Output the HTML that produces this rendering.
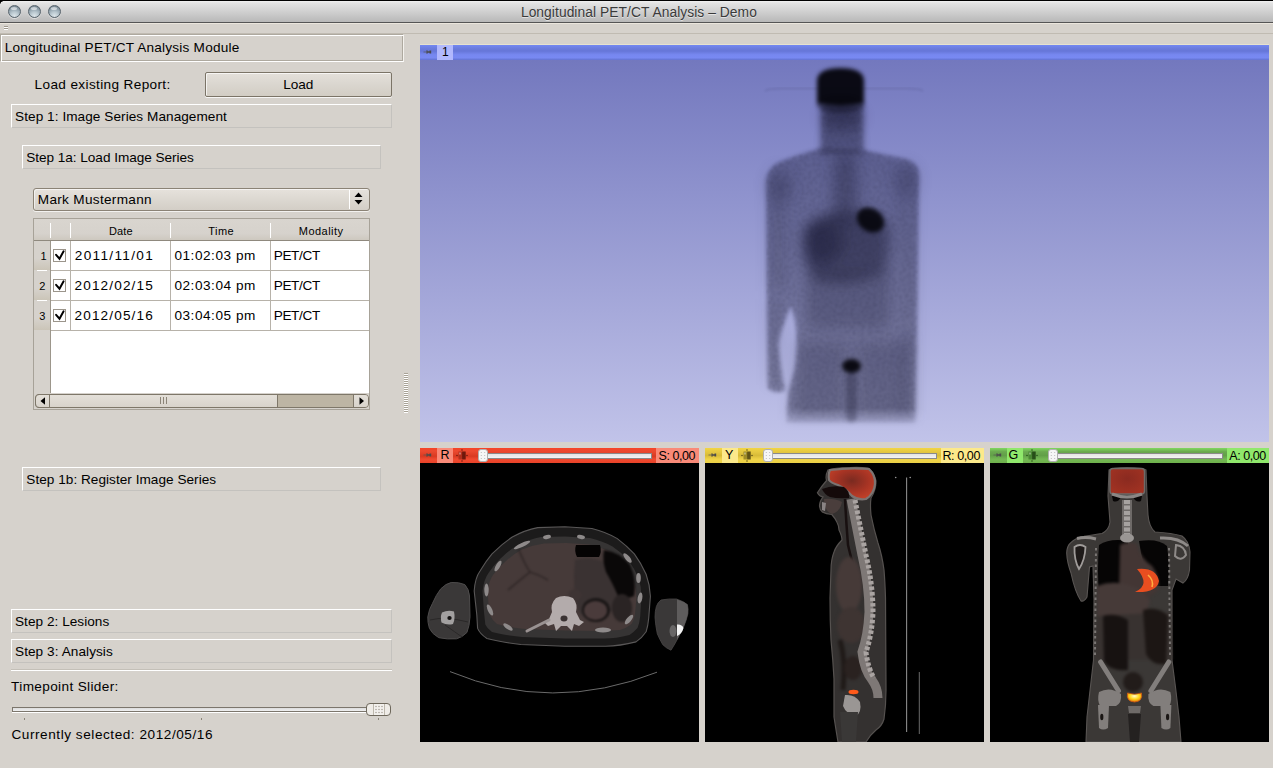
<!DOCTYPE html>
<html><head><meta charset="utf-8">
<style>
*{margin:0;padding:0;box-sizing:border-box}
html,body{width:1273px;height:768px;overflow:hidden;background:#d6d2cc;font-family:"Liberation Sans",sans-serif;color:#000}
.a{position:absolute}
.t{position:absolute;white-space:nowrap}
#titlebar{left:0;top:0;width:1273px;height:23px;background:linear-gradient(#000 0,#000 1px,#f2f2f2 1px,#e3e3e3 3px,#cfcfcf 12px,#b8b8b8 22px,#555 22px,#555 23px)}
.light{position:absolute;width:13px;height:13px;border-radius:50%;top:5px;border:1px solid #56626b;background:radial-gradient(circle at 50% 90%,#dde6ea 0,#b9c7cf 35%,#8a9ba6 70%,#6c7c87 100%);box-shadow:0 1px 0 rgba(255,255,255,.5)}
.light:after{content:"";position:absolute;left:2.5px;top:1px;width:6px;height:3px;border-radius:50%;background:rgba(255,255,255,.55)}
.cb{position:absolute;border-top:1px solid #fff;border-left:1px solid #fff;border-right:1px solid #c4c2be;border-bottom:1px solid #c4c2be}
.btn{position:absolute;border:1px solid #7b7467;border-radius:2px;background:linear-gradient(#e4e0da,#dad6cf 50%,#d2cdc4);box-shadow:inset 1px 1px 0 rgba(255,255,255,.7),0 1px 0 rgba(255,255,255,.8)}
.vh{position:absolute;left:34px;width:16px;background:linear-gradient(#d6d2cc 0,#d6d2cc 60%,#cbc5b8 100%)}
.chk{position:absolute;left:53px;width:13px;height:13px;border:1px solid #9b958b;background:#fff}
.gridh{position:absolute;height:1px;background:#b7b2a9}
.gridv{position:absolute;width:1px;background:#b7b2a9}
.vhdr{position:absolute;height:15px}

</style></head><body>
<div id="titlebar" class="a"></div>
<div class="a" style="left:0;top:1px;width:3px;height:3px;background:radial-gradient(circle at 100% 100%,transparent 2.2px,#000 3px)"></div>
<div class="light" style="left:7.5px"></div>
<div class="light" style="left:27.5px"></div>
<div class="light" style="left:47.5px"></div>
<div class="a" style="left:0;top:23px;width:1273px;height:1px;background:#ebe6dd"></div>
<div class="a" style="left:0;top:33px;width:1273px;height:1px;background:#c0bbb2"></div>
<div class="a" style="left:4px;top:26px;width:4px;height:1px;background:#9d978c"></div>
<div class="a" style="left:4px;top:27px;width:4px;height:1px;background:#fff"></div>
<div class="a" style="left:4px;top:28px;width:4px;height:1px;background:#9d978c"></div>
<div class="a" style="left:4px;top:29px;width:4px;height:1px;background:#fff"></div>
<!-- module title sunken box -->
<div class="a" style="left:0;top:34px;width:403px;height:27px;border:1px solid #aea99f"></div>
<div class="a" style="left:1px;top:35px;width:403px;height:27px;border:1px solid #fff;border-right-color:#f4f2ee"></div>
<!-- load button -->
<div class="btn" style="left:205px;top:72px;width:187px;height:25px"></div>
<!-- step boxes -->
<div class="cb" style="left:11px;top:104px;width:381px;height:24px"></div>
<div class="cb" style="left:22px;top:145px;width:359px;height:24px"></div>
<!-- combo -->
<div class="a" style="left:33px;top:188px;width:337px;height:23px;border:1px solid #8b8376;border-radius:3px;background:linear-gradient(#e6e2dc,#dcd8d1 50%,#d3cec6);box-shadow:inset 1px 1px 0 rgba(255,255,255,.6),0 1px 0 rgba(255,255,255,.7)"></div>
<div class="a" style="left:349px;top:190px;width:1px;height:19px;background:#fff"></div>
<svg class="a" style="left:353px;top:191px" width="11" height="15" viewBox="0 0 11 15"><path d="M5.5 1.5 L9.5 6 L1.5 6 Z M5.5 13.5 L9.5 9 L1.5 9 Z" fill="#000"/></svg>
<!-- table -->
<div class="a" style="left:33px;top:218px;width:337px;height:192px;border:1px solid #a7a298;background:#fff"></div>
<div class="a" style="left:34px;top:219px;width:335px;height:21px;background:linear-gradient(#d9d5cf,#d6d2cc 70%,#cdc8bf)"></div>
<div class="a" style="left:34px;top:240px;width:335px;height:1px;background:#8f897e"></div>
<div class="a" style="left:50px;top:223px;width:1px;height:15px;background:#fff"></div>
<div class="a" style="left:70px;top:223px;width:1px;height:15px;background:#fff"></div>
<div class="a" style="left:170px;top:223px;width:1px;height:15px;background:#fff"></div>
<div class="a" style="left:270px;top:223px;width:1px;height:15px;background:#fff"></div>
<div class="a" style="left:34px;top:241px;width:16px;height:152px;background:#d6d2cc"></div>
<div class="vh" style="top:241px;height:29px"></div>
<div class="vh" style="top:271px;height:29px"></div>
<div class="vh" style="top:301px;height:29px"></div>
<div class="a" style="left:37px;top:270px;width:10px;height:1px;background:#fff"></div>
<div class="a" style="left:37px;top:300px;width:10px;height:1px;background:#fff"></div>
<div class="a" style="left:50px;top:241px;width:1px;height:152px;background:#9c968b"></div>
<div class="gridv" style="left:70px;top:241px;height:89px"></div>
<div class="gridv" style="left:170px;top:241px;height:89px"></div>
<div class="gridv" style="left:270px;top:241px;height:89px"></div>
<div class="gridh" style="left:51px;top:270px;width:318px"></div>
<div class="gridh" style="left:51px;top:300px;width:318px"></div>
<div class="gridh" style="left:51px;top:330px;width:318px"></div>
<div class="chk" style="top:249px"></div>
<div class="chk" style="top:279px"></div>
<div class="chk" style="top:309px"></div>
<svg class="a" style="left:53px;top:249px" width="13" height="13" viewBox="0 0 13 13"><path d="M3.1 5.8 L6.5 9.7 L10.6 2.3" stroke="#000" stroke-width="2" fill="none" stroke-linecap="round"/></svg>
<svg class="a" style="left:53px;top:279px" width="13" height="13" viewBox="0 0 13 13"><path d="M3.1 5.8 L6.5 9.7 L10.6 2.3" stroke="#000" stroke-width="2" fill="none" stroke-linecap="round"/></svg>
<svg class="a" style="left:53px;top:309px" width="13" height="13" viewBox="0 0 13 13"><path d="M3.1 5.8 L6.5 9.7 L10.6 2.3" stroke="#000" stroke-width="2" fill="none" stroke-linecap="round"/></svg>
<!-- scrollbar -->
<div class="a" style="left:34px;top:393px;width:335px;height:16px;background:#d6d2cc"></div>
<div class="a" style="left:35px;top:394px;width:334px;height:14px;border:1px solid #7e7769;border-radius:4px;background:#bdb5a4"></div>
<div class="a" style="left:35px;top:394px;width:243px;height:14px;border:1px solid #7e7769;border-radius:4px 0 0 4px;background:linear-gradient(#e4e0d9,#d8d3cb)"></div>
<div class="a" style="left:49px;top:395px;width:1px;height:12px;background:#7e7769"></div>
<div class="a" style="left:353px;top:395px;width:1px;height:12px;background:#7e7769"></div>
<div class="a" style="left:354px;top:395px;width:14px;height:12px;background:linear-gradient(#e4e0d9,#d8d3cb);border-radius:0 3px 3px 0"></div>
<svg class="a" style="left:38px;top:396px" width="10" height="10" viewBox="0 0 10 10"><path d="M2.5 5 L7 1.2 L7 8.8 Z" fill="#000"/></svg>
<svg class="a" style="left:356px;top:396px" width="10" height="10" viewBox="0 0 10 10"><path d="M8 5 L3.5 1.2 L3.5 8.8 Z" fill="#000"/></svg>
<div class="a" style="left:160px;top:397px;width:1px;height:7px;background:#8c8578"></div>
<div class="a" style="left:163px;top:397px;width:1px;height:7px;background:#8c8578"></div>
<div class="a" style="left:166px;top:397px;width:1px;height:7px;background:#8c8578"></div>
<!-- splitter grip -->
<div class="a" style="left:404px;top:373px;width:4px;height:40px;background:repeating-linear-gradient(#a8a296 0,#a8a296 1px,#fff 1px,#fff 2px)"></div>
<!-- step 1b, 2, 3 -->
<div class="cb" style="left:22px;top:467px;width:359px;height:24px"></div>
<div class="cb" style="left:11px;top:609px;width:381px;height:24px"></div>
<div class="cb" style="left:11px;top:639px;width:381px;height:24px"></div>
<div class="a" style="left:11px;top:669px;width:381px;height:1px;background:#c4c0b8"></div>
<div class="a" style="left:11px;top:670px;width:381px;height:1px;background:#fff"></div>
<!-- slider -->
<div class="a" style="left:12px;top:707px;width:360px;height:5px;border:1px solid #7c766c;background:linear-gradient(#dcdcdc,#f0f0f0);box-shadow:0 1px 0 #fff"></div>
<div class="a" style="left:366px;top:703px;width:25px;height:13px;border:1px solid #6e685c;border-radius:4px;background:linear-gradient(90deg,#efece7 0,#efece7 6px,#bdb7ac 6px,#bdb7ac 7px,#f3f1ed 7px,#f3f1ed 17px,#bdb7ac 17px,#bdb7ac 18px,#efece7 18px)"></div>
<svg class="a" style="left:374px;top:705px" width="10" height="9" viewBox="0 0 10 9"><g fill="#9d968a"><circle cx="2" cy="1.5" r=".7"/><circle cx="5" cy="1.5" r=".7"/><circle cx="8" cy="1.5" r=".7"/><circle cx="2" cy="4.5" r=".7"/><circle cx="5" cy="4.5" r=".7"/><circle cx="8" cy="4.5" r=".7"/><circle cx="2" cy="7.5" r=".7"/><circle cx="5" cy="7.5" r=".7"/><circle cx="8" cy="7.5" r=".7"/></g></svg>
<div class="a" style="left:24px;top:718px;width:1px;height:2px;background:#8a8478"></div>
<div class="a" style="left:201px;top:718px;width:1px;height:2px;background:#8a8478"></div>
<div class="a" style="left:378px;top:718px;width:1px;height:2px;background:#8a8478"></div>
<!-- 3D view -->
<div class="a" style="left:420px;top:44px;width:849px;height:1px;background:#e6e2cf"></div>
<div class="a" style="left:420px;top:45px;width:849px;height:15px;background:linear-gradient(#7388f2 0,#6a7bdc 25%,#6676d8 40%,#7788f0 65%,#7889f2 85%,#6272d0 100%)"></div>
<div class="a" style="left:437px;top:45px;width:16px;height:15px;background:#b1b8fd"></div>
<div id="bg3d" class="a" style="left:420px;top:60px;width:849px;height:382px;background:linear-gradient(#7378be,#c1c3e9)"></div>
<!-- slice views -->
<div class="vhdr a" style="left:420px;top:448px;width:279px;background:linear-gradient(#f64326 0,#ec4a30 20%,#d93a22 55%,#f04a30 75%,#e94228 100%)"></div>
<div class="a" style="left:437px;top:448px;width:16px;height:15px;background:#f98a78"></div>
<div class="a" style="left:656px;top:448px;width:43px;height:15px;background:#f98a78"></div>
<div class="vhdr a" style="left:705px;top:448px;width:279px;background:linear-gradient(#f2d544 0,#e3c640 30%,#d8bb38 50%,#f0d348 75%,#ead046 100%)"></div>
<div class="a" style="left:722px;top:448px;width:16px;height:15px;background:#fce98a"></div>
<div class="a" style="left:941px;top:448px;width:43px;height:15px;background:#fce98a"></div>
<div class="vhdr a" style="left:990px;top:448px;width:279px;background:linear-gradient(#80d860 0,#6aa84f 25%,#62a048 50%,#74b854 75%,#6eb04b 100%)"></div>
<div class="a" style="left:1007px;top:448px;width:16px;height:15px;background:#90e86c"></div>
<div class="a" style="left:1227px;top:448px;width:42px;height:15px;background:#90e86c"></div>
<div class="a" style="left:420px;top:463px;width:279px;height:279px;background:#000"></div>
<div class="a" style="left:705px;top:463px;width:279px;height:279px;background:#000"></div>
<div class="a" style="left:990px;top:463px;width:279px;height:279px;background:#000"></div>

<svg class="a" style="left:420px;top:60px" width="849" height="382" viewBox="420 60 849 382">
<defs>
<filter color-interpolation-filters="sRGB" id="bl1" x="-50%" y="-50%" width="200%" height="200%"><feGaussianBlur stdDeviation="1"/></filter>
<filter color-interpolation-filters="sRGB" id="bl2" x="-50%" y="-50%" width="200%" height="200%"><feGaussianBlur stdDeviation="2"/></filter>
<filter color-interpolation-filters="sRGB" id="bl3" x="-50%" y="-50%" width="200%" height="200%"><feGaussianBlur stdDeviation="3"/></filter>
<filter color-interpolation-filters="sRGB" id="bl5" x="-50%" y="-50%" width="200%" height="200%"><feGaussianBlur stdDeviation="6.5"/></filter>
<linearGradient id="neckg" x1="0" y1="0" x2="0" y2="1"><stop offset="0" stop-color="#1c1c36" stop-opacity=".6"/><stop offset="1" stop-color="#1c1c36" stop-opacity=".45"/></linearGradient>
<filter color-interpolation-filters="sRGB" id="grain" x="0" y="0" width="100%" height="100%"><feTurbulence type="fractalNoise" baseFrequency="0.45" numOctaves="2" seed="7" result="n"/><feColorMatrix in="n" type="matrix" values="0 0 0 0 0.08  0 0 0 0 0.08  0 0 0 0 0.16  0 0 0 1.6 -0.7" result="a"/><feComposite in="a" in2="SourceAlpha" operator="in" result="c"/><feGaussianBlur in="c" stdDeviation="0.9"/></filter>
<linearGradient id="fadeg" gradientUnits="userSpaceOnUse" x1="0" y1="408" x2="0" y2="432"><stop offset="0" stop-color="#fff"/><stop offset="1" stop-color="#000"/></linearGradient>
<mask id="fade" maskUnits="userSpaceOnUse" x="420" y="60" width="849" height="382"><rect x="420" y="60" width="849" height="382" fill="url(#fadeg)"/></mask>
</defs>
<g mask="url(#fade)">
<path d="M765 91 Q768 88.5 780 88.5 L908 88.5 Q920 88.5 923 91" stroke="#30305a" stroke-width="1.5" fill="none" opacity="0.18" filter="url(#bl1)"/>
<!-- silhouette -->
<g opacity="0.36" filter="url(#bl2)" fill="#1a1a36">
<path d="M822 148 Q800 154 782 161 Q768 166 766 182 L767 300 L768 388 Q776 395 785 390 Q782 378 780.5 366 Q778.5 352 778.5 342 Q783 322 791 306 Q797 322 797 342 Q796.5 356 795.5 366 Q792 380 789 390 Q787 405 787 423 L915 423 L917 330 L919 175 Q918 162 905 159 L863 150 Z"/>
</g>
<!-- neck -->
<path d="M821 104 L863 104 L864 154 L820 154 Z" fill="url(#neckg)" filter="url(#bl3)"/>
<g fill="#161630" filter="url(#bl5)">
<path d="M834 155 L856 155 L858 222 L832 222 Z" opacity=".35"/>
<path d="M803 232 Q810 214 840 212 Q880 212 888 222 Q892 250 885 272 Q850 288 815 280 Q801 266 803 232 Z" opacity=".5"/>
<ellipse cx="826" cy="240" rx="20" ry="22" opacity=".3"/>
<path d="M806 274 L890 270 L890 330 L806 330 Z" opacity=".25"/>
<path d="M795 336 L912 336 L913 423 L789 423 Z" opacity=".14"/>
<path d="M800 345 L843 345 L843 420 L795 420 Z" opacity=".12"/>
<path d="M860 345 L910 345 L910 420 L860 420 Z" opacity=".12"/>
<path d="M767 178 L788 178 L788 290 L768 290 Z" opacity=".12"/>
<path d="M768 300 L782 300 L782 385 L769 385 Z" opacity=".12"/>
<path d="M896 170 L918 170 L917 420 L900 420 Z" opacity=".1"/>
<ellipse cx="842" cy="118" rx="20" ry="12" opacity=".35"/>
<ellipse cx="780" cy="185" rx="13" ry="18" opacity=".18"/>
<ellipse cx="906" cy="180" rx="13" ry="18" opacity=".15"/>
<ellipse cx="818" cy="245" rx="16" ry="24" opacity=".2"/>
</g>
<path filter="url(#grain)" opacity=".4" fill="#000" d="M822 148 Q800 154 782 161 Q768 166 766 182 L767 300 L768 388 Q776 395 785 390 Q782 378 780.5 366 Q778.5 352 778.5 342 Q783 322 791 306 Q797 322 797 342 Q796.5 356 795.5 366 Q792 380 789 390 Q787 405 787 423 L915 423 L917 330 L919 175 Q918 162 905 159 L863 150 L863 104 L821 104 Z"/>
</g>
<g filter="url(#bl2)">
<ellipse cx="840.5" cy="104" rx="24" ry="9" fill="#0c0c1a" opacity=".45"/>
<path d="M817 103 L817 80 Q818 68 840.5 68 Q863 68 864 80 L864 103 Q840 109 817 103 Z" fill="#05050d" opacity=".96"/>
<ellipse cx="870.4" cy="220" rx="14.5" ry="11.5" fill="#05050c" opacity=".92" transform="rotate(35 870.4 220)"/>
<ellipse cx="851.5" cy="366" rx="9.5" ry="7" fill="#05050c" opacity=".95"/>
<rect x="846" y="372" width="11" height="50" rx="5" fill="#14142a" opacity=".3"/>
</g>
</svg>
<svg class="a" style="left:420px;top:463px" width="279" height="279" viewBox="420 463 279 279">
<defs>
<filter color-interpolation-filters="sRGB" id="s06" x="-20%" y="-20%" width="140%" height="140%"><feGaussianBlur stdDeviation="0.6"/></filter>
<filter color-interpolation-filters="sRGB" id="s1" x="-20%" y="-20%" width="140%" height="140%"><feGaussianBlur stdDeviation="1.2"/></filter>
<filter color-interpolation-filters="sRGB" id="s2" x="-20%" y="-20%" width="140%" height="140%"><feGaussianBlur stdDeviation="2.5"/></filter>
</defs>
<rect x="420" y="463" width="279" height="279" fill="#000"/>
<!-- table arc -->
<path d="M450 671.6 Q552 714 657 672.2" stroke="#6a6a6a" stroke-width="1" fill="none"/>
<g filter="url(#s06)">
<!-- body skin -->
<path id="axb" d="M476.8 614.8 L474.2 591 Q475 578 480.2 570.8 Q486 561 492 553.9 Q502 544 512.3 537 Q525 530 537.7 527.6 L564.8 526.8 L591.9 528.5 Q606 532 617.3 538.6 Q627 546 634.3 553.9 Q641 563 646.1 574.2 Q650 585 650.4 596.2 L648.7 618.2 Q648 626 646.1 631.8 Q642 638 636 641.9 Q620 646 605.5 646.2 L564.8 646.2 L520.8 644.5 Q500 642 486.9 638.5 Q480 634 477.6 628.4 Z" fill="#1c1b1b" stroke="#595757" stroke-width="1.1"/>
<!-- muscle ring -->
<path d="M484 612 L482.5 591 Q484 579 488.5 573 Q494 565 500 559 Q509 550 518 545 Q530 539 541 537 L565 536.5 L590 538 Q603 541 612.5 546.5 Q622 553 628.5 560 Q634 568 638.5 578 Q641.5 587 641.5 596.5 L640.2 616.5 Q639.5 623.5 637.5 628 Q633.5 632.5 629.5 635 Q616 638.5 604 638.5 L565 638.5 L522 637 Q503 635 492 632 Q487 628.5 485.3 624.5 Z" fill="#363434"/>
<!-- cavity -->
<path d="M489 610 L487.5 591 Q489 581 493 575 Q499 567 505 562 Q513 554 522 549.5 Q533 545 544 543.5 L566 543 L589 544.5 Q601 547 610 552 Q619 558 625 565 Q630.5 573 634 582 Q636.5 590 636.5 598 L635 614 Q634 620 631.5 624 Q626 628.5 620 630 L600 631 L565 630.5 L525 629 Q507 627 497 624 Q492 620 490.5 616 Z" fill="#463a39"/>
</g>
<g filter="url(#s1)">
<!-- right side darker organs -->
<path d="M575 560 Q590 556 604 562 Q618 575 622 595 Q615 612 600 620 Q585 622 578 610 Q572 590 575 560 Z" fill="#3a3232"/>
<path d="M604 550 Q620 552 630 565 Q637 580 634 596 Q626 600 618 596 Q612 582 606 572 Q602 560 604 550 Z" fill="#0a0808"/>
<ellipse cx="622" cy="608" rx="10" ry="14" fill="#2a2424"/>
<ellipse cx="596" cy="610" rx="14" ry="12" fill="#1a1616"/>
<ellipse cx="595.5" cy="610.5" rx="11.5" ry="9.5" fill="#4a3b3b"/>
<ellipse cx="575" cy="595" rx="6.5" ry="6" fill="#3e3434"/>
<!-- liver vessels -->
<path d="M518 548 Q525 565 530 572 Q520 580 508 590 M530 572 Q540 575 548 580" stroke="#2a2222" stroke-width="1.2" fill="none"/>
</g>
<g filter="url(#s06)">
<!-- stomach air -->
<path d="M576 545 L600 545 Q602 552 599 557 L577 557 Q574 551 576 545 Z" fill="#050303"/>
<!-- vertebra -->
<path d="M556 598 Q564 594 573 598 Q578 604 576 612 L580 620 L584 622 L579 626 L574 624 L572 631 L567 626 L561 626 L556 631 L554 624 L548 626 L544 622 L549 619 L552 612 Q550 604 556 598 Z" fill="#b3abab"/>
<ellipse cx="564" cy="618.5" rx="3.5" ry="3" fill="#3a3232"/>
<path d="M549 620 L527 631" stroke="#9a9292" stroke-width="3" stroke-linecap="round"/>
<!-- ribs -->
<g fill="#8e8a8a">
<ellipse cx="498" cy="566" rx="2.2" ry="6" transform="rotate(30 498 566)"/>
<ellipse cx="486.5" cy="590" rx="2.2" ry="6.5"/>
<ellipse cx="490" cy="610" rx="2.2" ry="6" transform="rotate(-25 490 610)"/>
<ellipse cx="508" cy="627" rx="2.2" ry="5.5" transform="rotate(-55 508 627)"/>
<ellipse cx="522" cy="545" rx="2" ry="9" transform="rotate(65 522 545)"/>
<ellipse cx="547" cy="537" rx="2" ry="4" transform="rotate(80 547 537)"/>
<ellipse cx="581" cy="537" rx="2" ry="4" transform="rotate(100 581 537)"/>
<ellipse cx="627.5" cy="558" rx="2.3" ry="6" transform="rotate(-40 627.5 558)"/>
<ellipse cx="638.5" cy="578" rx="2.3" ry="5"/>
<ellipse cx="640" cy="598" rx="2.3" ry="5.5" transform="rotate(10 640 598)"/>
<ellipse cx="629" cy="619.5" rx="2.3" ry="6" transform="rotate(40 629 619.5)"/>
<ellipse cx="603" cy="630" rx="8" ry="2.5"/>
</g>
<!-- arms -->
<path d="M451.2 582.5 Q459 582 464.8 584.6 Q469 589 469.5 596 L470 616.9 Q469.5 626 466.9 632.5 Q462 637.5 456.5 638.8 Q447 639.5 438.8 637.7 Q432 634 429.4 628.3 Q427.5 622 427.8 616.9 Q429 609 432.5 603.3 Q436 595 440.8 588.8 Q446 583.5 451.2 582.5 Z" fill="#3a3838" stroke="#4e4c4c" stroke-width="1"/>
<path d="M430 620 Q445 616 468 622 M445 625 Q455 632 462 637" stroke="#2a2828" stroke-width="1" fill="none"/>
<path d="M442 612.5 Q448 609.5 454 611.5 Q455.5 619 453 624 Q447 625.5 441.5 622.5 Q440 617 442 612.5 Z" fill="#a2a0a0"/>
<ellipse cx="449.5" cy="618" rx="2.2" ry="2" fill="#141212"/>
<path d="M661 600 Q669 598.5 676.5 599 Q683 601 687.4 604.6 Q688.5 609 687.9 613.7 Q686.5 620 683.8 626.5 Q681 632 678.3 637.4 Q675 644 671 650.2 Q666 648 662.8 644.7 Q659.5 639 657.3 633.8 Q655.5 625 655 617.3 Q655 611 656.4 606.4 Q658 602 661 600 Z" fill="#3a3838" stroke="#4a4848" stroke-width=".8"/>
<path d="M677 599.5 Q683 601 687.4 604.6 Q688.5 609 687.9 613.7 Q686.5 620 683.8 626.5 Q681 632 678.3 637.4 L677 640 Z" fill="#5e5c5c"/>
<ellipse cx="673" cy="631" rx="3.5" ry="6" fill="#686666"/>
<path d="M677 624.5 Q682 624 683.5 628 Q682 634 677 636 Z" fill="#f2f2f2"/>
</g>
</svg>
<svg class="a" style="left:705px;top:463px" width="279" height="279" viewBox="705 463 279 279">
<defs>
<filter color-interpolation-filters="sRGB" id="g06" x="-20%" y="-20%" width="140%" height="140%"><feGaussianBlur stdDeviation="0.7"/></filter>
<filter color-interpolation-filters="sRGB" id="g15" x="-20%" y="-20%" width="140%" height="140%"><feGaussianBlur stdDeviation="1.5"/></filter>
<radialGradient id="brainS" cx="50%" cy="40%" r="60%"><stop offset="0" stop-color="#7a2a20"/><stop offset=".6" stop-color="#a83424"/><stop offset="1" stop-color="#c04028"/></radialGradient>
</defs>
<rect x="705" y="463" width="279" height="279" fill="#000"/>
<path d="M906.6 477.5 L906.6 732" stroke="#8a8a8a" stroke-width="1.1"/>
<path d="M919.3 672 L919.3 734" stroke="#6a6a6a" stroke-width="1"/>
<circle cx="895.7" cy="477.5" r=".8" fill="#999"/><circle cx="910.2" cy="477.5" r=".8" fill="#999"/>
<g filter="url(#g06)">
<path d="M850 467.5 Q834 467.5 828 470 Q825 476 826.6 480.5 Q821 487 817.4 492.7 Q819 496 823 497 Q819 502 819.6 506.6 Q820 510 822.2 511.9 Q826 514 831.8 514.5 Q835 518 837 522.3 Q839 526 839 530 Q842 536 842 540 Q836 546 834 552 Q831 560 831 570 L830 598 Q830 620 831 640 Q833 660 834 679 L834 717 Q836 730 838 742 L866 742 Q870 735 876 730 Q882 726 884 719 Q886 705 886 690 L885.5 598 Q885 582 884 570 Q882 555 878 543 Q874 530 871 515 Q870 505 871 498 Q876 490 876 481 Q874 472 868 468 Q860 467 850 467.5 Z" fill="#343130" stroke="#55514f" stroke-width="1.2"/>
<path d="M830 470 Q850 467.5 869 469 Q875.5 475 875 484 Q874 494 866 499 Q858 500.5 852 496 Q846 489 838 485 Q831 483 829 480 Q828 474 830 470 Z" fill="url(#brainS)" stroke="#7c7472" stroke-width="2.2"/>
<path d="M822 489 Q832 485 844 487 Q850 491 849 498 Q838 499 830 497 Q824 494 822 489 Z" fill="#140a0a"/>
<path d="M824 499 Q834 498 842 502 Q840 512 832 514 Q824 511 824 499 Z" fill="#4a3e3c"/>
<path d="M822 502 L826 503 L825 511 L822 510 Z" fill="#8a8484"/>
<path d="M845 499 Q846 520 848 545 Q852 562 856 575" stroke="#181010" stroke-width="2.5" fill="none"/>
</g>
<g filter="url(#g15)">
<ellipse cx="849" cy="585" rx="13" ry="28" fill="#463a38"/>
<ellipse cx="851" cy="625" rx="14" ry="18" fill="#3e3432"/>
<path d="M840 640 Q846 660 843 690" stroke="#1a1412" stroke-width="5" fill="none" opacity=".8"/>
<ellipse cx="853" cy="668" rx="9" ry="12" fill="#2a2220"/>
</g>
<g filter="url(#g06)">
<path d="M851 499 Q856 525 862 555 Q869 585 869 612 Q868 635 862 652 Q864 670 872 680 Q878 688 878 698" stroke="#7e7876" stroke-width="9" fill="none"/>
<path d="M855 500 Q860 525 866 555 Q873 585 873 612 Q872 635 866 652 Q868 668 874 678" stroke="#aaa4a2" stroke-width="5" fill="none" stroke-dasharray="3.5 2"/>
<ellipse cx="853.5" cy="692" rx="5" ry="2.2" fill="#ff5a1a"/>
<path d="M845 695 Q855 694 860 702 Q862 712 856 716 Q846 714 843 706 Z" fill="#9a9694"/>
<path d="M840 712 L858 712 L856 742 L842 742 Z" fill="#3a3837"/>
</g>
</svg>
<svg class="a" style="left:990px;top:463px" width="279" height="279" viewBox="990 463 279 279">
<defs>
<filter color-interpolation-filters="sRGB" id="c06" x="-20%" y="-20%" width="140%" height="140%"><feGaussianBlur stdDeviation="0.7"/></filter>
<filter color-interpolation-filters="sRGB" id="c15" x="-20%" y="-20%" width="140%" height="140%"><feGaussianBlur stdDeviation="1.6"/></filter>
<radialGradient id="brainC" cx="50%" cy="40%" r="60%"><stop offset="0" stop-color="#8a2a20"/><stop offset="1" stop-color="#a03222"/></radialGradient>
<radialGradient id="bladder" cx="50%" cy="35%" r="60%"><stop offset="0" stop-color="#fffbd0"/><stop offset=".55" stop-color="#ffd81a"/><stop offset="1" stop-color="#e88010"/></radialGradient>
</defs>
<rect x="990" y="463" width="279" height="279" fill="#000"/>
<g filter="url(#c06)">
<path d="M1109 470 Q1112 467.5 1127 467.5 Q1143 467.5 1146 470 L1147 496 L1148 515 Q1149 527 1155 532 Q1172 533 1182 536 Q1189 541 1190 552 L1189.5 570 Q1188 580 1183 583 L1176 579 L1172 590 L1172 660 Q1176 690 1179 717 L1181 742 L1086 742 L1087 717 Q1090 690 1093.5 660 L1094 600 L1093 566 L1089.5 567 L1087 597 Q1084 602 1081 601 Q1075 592 1071 573 Q1067 562 1066.7 553 Q1067 546 1070.5 543 Q1077 537 1084 536.4 Q1095 534.5 1102 533.5 Q1109 530 1110 522 L1108 496 Z" fill="#3b3836" stroke="#595553" stroke-width="1.1"/>
<rect x="1110" y="468.5" width="34.5" height="25.5" rx="3" fill="url(#brainC)" stroke="#6e6a68" stroke-width="1.4"/>
<path d="M1112 496 Q1117 492 1121 497 Q1118 503 1113 501 Z M1142 496 Q1137 492 1133 497 Q1136 503 1141 501 Z" fill="#080606"/>
<path d="M1099 545 Q1110 538 1128 541 L1128 570 Q1122 585 1118 594 L1099 594 Q1097 570 1099 545 Z" fill="#060505"/>
<path d="M1139 541 Q1158 538 1167 546 Q1170 565 1168 586 L1152 586 Q1142 565 1139 541 Z" fill="#060505"/>
</g>
<g filter="url(#c15)">
<path d="M1120 545 Q1128 540 1137 544 Q1140 558 1152 566 Q1160 576 1158 590 Q1150 598 1136 600 Q1122 600 1119 594 Z" fill="#433634"/>
<path d="M1097 586 Q1118 578 1140 590 L1150 600 L1146 616 L1097 616 Z" fill="#463a38"/>
<path d="M1097 616 L1170 612 L1172 660 L1095 660 Z" fill="#383230"/>
<path d="M1103 616 Q1115 612 1128 620 L1128 670 Q1112 672 1104 662 Z" fill="#171211"/>
<path d="M1143 610 Q1158 606 1168 616 L1166 664 Q1152 666 1146 654 Z" fill="#1c1614"/>
<ellipse cx="1133" cy="682" rx="10" ry="10" fill="#221c1a"/>
</g>
<g filter="url(#c06)">
<path d="M1137 569 Q1156 567 1159 581 Q1157 593 1135 592 Q1151 585 1137 569 Z" fill="#e84e20"/>
<path d="M1148 575 Q1154 580 1152 587" stroke="#ffb040" stroke-width="1.6" fill="none"/>
<!-- neck spine -->
<path d="M1127 500 L1127 536" stroke="#6e6a68" stroke-width="10"/>
<path d="M1127 500 L1127 536" stroke="#a6a2a0" stroke-width="6" stroke-dasharray="4 1.5"/>
<ellipse cx="1127" cy="538" rx="7" ry="4.5" fill="#9a9694"/>
<path d="M1112 494 Q1127 500 1142 494" stroke="#8a8684" stroke-width="3" fill="none"/>
<!-- shoulders -->
<path d="M1077 538.5 Q1086 536.5 1096 539" stroke="#8e8a88" stroke-width="3" fill="none"/>
<path d="M1160 538 Q1178 537 1188 546" stroke="#8e8a88" stroke-width="3" fill="none"/>
<path d="M1074.5 547 Q1080 543 1085.5 547 Q1085 560 1079 569 Q1074 560 1074.5 547 Z" fill="#1e1a19" stroke="#a09c9a" stroke-width="1.8"/>
<path d="M1176 545 Q1185 546 1186 555 Q1181 562 1175 556 Z" fill="none" stroke="#8e8a88" stroke-width="2"/>
<!-- ribs lateral -->
<path d="M1096 548 L1095 655" stroke="#7a7674" stroke-width="2" stroke-dasharray="2.5 3"/>
<path d="M1169 548 L1170 655" stroke="#7a7674" stroke-width="2" stroke-dasharray="2.5 3"/>
<!-- pelvis -->
<path d="M1100.6 662 L1118.5 690.7" stroke="#827e7c" stroke-width="5" stroke-linecap="round" fill="none"/>
<path d="M 1168.8 662.0 L 1150.9 690.7" stroke="#827e7c" stroke-width="5" stroke-linecap="round" fill="none"/>
<path d="M1099 692 Q1110 686 1121 694 Q1122 703 1116 706 L1100 706 Q1097 700 1099 692 Z" fill="#827e7c"/>
<path d="M 1170.4 692.0 Q 1159.4 686.0 1148.4 694.0 Q 1147.4 703.0 1153.4 706.0 L 1169.4 706.0 Q 1172.4 700.0 1170.4 692.0 Z" fill="#827e7c"/>
<path d="M1098 705 L1109 705 L1108 728 Q1103 731 1099 728 Z" fill="#827e7c"/>
<path d="M 1171.4 705.0 L 1160.4 705.0 L 1161.4 728.0 Q 1166.4 731.0 1170.4 728.0 Z" fill="#827e7c"/>
<ellipse cx="1101.8" cy="717" rx="1.6" ry="3.2" fill="#1a1614"/>
<ellipse cx="1167.6" cy="717" rx="1.6" ry="3.2" fill="#1a1614"/>
<path d="M1128 706 L1141 706 L1140 713 L1129 713 Z" fill="#6e6a68"/>
<path d="M1127.5 693 Q1134.5 695.5 1141.5 693 Q1143 701.5 1134.5 702 Q1126 701.5 1127.5 693 Z" fill="url(#bladder)" stroke="#d05a10" stroke-width=".8"/>
<path d="M1128 714 L1141 714 L1139 742 L1130 742 Z" fill="#242120"/>
</g>
</svg>
<svg class="a" style="left:423px;top:452px" width="10" height="6" viewBox="0 0 10 6"><path d="M0.5 3 L4 3" stroke="#555" stroke-width=".7"/><path d="M3.5 1.2 L4.5 1.2 L4.5 2.2 L6.5 2.2 L6.5 1.4 L8.2 1.4 L8.2 4.6 L6.5 4.6 L6.5 3.8 L4.5 3.8 L4.5 4.8 L3.5 4.8 Z" fill="#4a4a4a"/></svg>
<svg class="a" style="left:456px;top:449px" width="12" height="13" viewBox="0 0 12 13"><rect x="2.5" y="2.5" width="3.6" height="8" fill="#a02818" opacity=".75"/><rect x="6.1" y="2.5" width="3.6" height="8" fill="#5a1208" opacity=".85"/><rect x="3" y="3.5" width="2" height="2" fill="#fff" opacity=".35"/><g fill="#5a1208"><circle cx="6" cy="1" r=".7"/><circle cx="6" cy="12" r=".7"/><circle cx="1" cy="6.5" r=".7"/><circle cx="11" cy="6.5" r=".7"/></g></svg>
<div class="a" style="left:487px;top:453px;width:165px;height:6px;border:1px solid #8a8a8a;border-left:none;background:linear-gradient(#e4e4e4,#f4f4f4);"></div>
<div class="a" style="left:478px;top:449px;width:10px;height:13px;border:1px solid #b0b0b0;border-radius:3px;background:#f6f6f6"></div>
<svg class="a" style="left:479px;top:450px" width="8" height="11" viewBox="0 0 8 11"><g fill="#b8b8b8"><circle cx="2.3" cy="2.5" r=".6"/><circle cx="5.7" cy="2.5" r=".6"/><circle cx="2.3" cy="5.5" r=".6"/><circle cx="5.7" cy="5.5" r=".6"/><circle cx="2.3" cy="8.5" r=".6"/><circle cx="5.7" cy="8.5" r=".6"/></g></svg>
<svg class="a" style="left:708px;top:452px" width="10" height="6" viewBox="0 0 10 6"><path d="M0.5 3 L4 3" stroke="#555" stroke-width=".7"/><path d="M3.5 1.2 L4.5 1.2 L4.5 2.2 L6.5 2.2 L6.5 1.4 L8.2 1.4 L8.2 4.6 L6.5 4.6 L6.5 3.8 L4.5 3.8 L4.5 4.8 L3.5 4.8 Z" fill="#4a4a4a"/></svg>
<svg class="a" style="left:741px;top:449px" width="12" height="13" viewBox="0 0 12 13"><rect x="2.5" y="2.5" width="3.6" height="8" fill="#8a7a20" opacity=".75"/><rect x="6.1" y="2.5" width="3.6" height="8" fill="#4a4010" opacity=".85"/><rect x="3" y="3.5" width="2" height="2" fill="#fff" opacity=".35"/><g fill="#4a4010"><circle cx="6" cy="1" r=".7"/><circle cx="6" cy="12" r=".7"/><circle cx="1" cy="6.5" r=".7"/><circle cx="11" cy="6.5" r=".7"/></g></svg>
<div class="a" style="left:772px;top:453px;width:165px;height:6px;border:1px solid #8a8a8a;border-left:none;background:linear-gradient(#e4e4e4,#f4f4f4);"></div>
<div class="a" style="left:763px;top:449px;width:10px;height:13px;border:1px solid #b0b0b0;border-radius:3px;background:#f6f6f6"></div>
<svg class="a" style="left:764px;top:450px" width="8" height="11" viewBox="0 0 8 11"><g fill="#b8b8b8"><circle cx="2.3" cy="2.5" r=".6"/><circle cx="5.7" cy="2.5" r=".6"/><circle cx="2.3" cy="5.5" r=".6"/><circle cx="5.7" cy="5.5" r=".6"/><circle cx="2.3" cy="8.5" r=".6"/><circle cx="5.7" cy="8.5" r=".6"/></g></svg>
<svg class="a" style="left:993px;top:452px" width="10" height="6" viewBox="0 0 10 6"><path d="M0.5 3 L4 3" stroke="#555" stroke-width=".7"/><path d="M3.5 1.2 L4.5 1.2 L4.5 2.2 L6.5 2.2 L6.5 1.4 L8.2 1.4 L8.2 4.6 L6.5 4.6 L6.5 3.8 L4.5 3.8 L4.5 4.8 L3.5 4.8 Z" fill="#4a4a4a"/></svg>
<svg class="a" style="left:1026px;top:449px" width="12" height="13" viewBox="0 0 12 13"><rect x="2.5" y="2.5" width="3.6" height="8" fill="#3e7a2a" opacity=".75"/><rect x="6.1" y="2.5" width="3.6" height="8" fill="#1c4010" opacity=".85"/><rect x="3" y="3.5" width="2" height="2" fill="#fff" opacity=".35"/><g fill="#1c4010"><circle cx="6" cy="1" r=".7"/><circle cx="6" cy="12" r=".7"/><circle cx="1" cy="6.5" r=".7"/><circle cx="11" cy="6.5" r=".7"/></g></svg>
<div class="a" style="left:1057px;top:453px;width:166px;height:6px;border:1px solid #8a8a8a;border-left:none;background:linear-gradient(#e4e4e4,#f4f4f4);"></div>
<div class="a" style="left:1048px;top:449px;width:10px;height:13px;border:1px solid #b0b0b0;border-radius:3px;background:#f6f6f6"></div>
<svg class="a" style="left:1049px;top:450px" width="8" height="11" viewBox="0 0 8 11"><g fill="#b8b8b8"><circle cx="2.3" cy="2.5" r=".6"/><circle cx="5.7" cy="2.5" r=".6"/><circle cx="2.3" cy="5.5" r=".6"/><circle cx="5.7" cy="5.5" r=".6"/><circle cx="2.3" cy="8.5" r=".6"/><circle cx="5.7" cy="8.5" r=".6"/></g></svg>
<svg class="a" style="left:423px;top:49px" width="10" height="6" viewBox="0 0 10 6"><path d="M0.5 3 L4 3" stroke="#555" stroke-width=".7"/><path d="M3.5 1.2 L4.5 1.2 L4.5 2.2 L6.5 2.2 L6.5 1.4 L8.2 1.4 L8.2 4.6 L6.5 4.6 L6.5 3.8 L4.5 3.8 L4.5 4.8 L3.5 4.8 Z" fill="#4a4a4a"/></svg>
<div class="t" style="left:520.90px;top:6.22px;font-size:13.8px;line-height:13.8px;letter-spacing:0.068px;color:#3a3a3a;text-shadow:0 1px 0 rgba(255,255,255,.55)">Longitudinal PET/CT Analysis – Demo</div>
<div class="t" style="left:4.70px;top:40.79px;font-size:13.6px;line-height:13.6px;letter-spacing:0.217px;color:#000;">Longitudinal PET/CT Analysis Module</div>
<div class="t" style="left:34.60px;top:77.89px;font-size:13.6px;line-height:13.6px;letter-spacing:0.361px;color:#000;">Load existing Report:</div>
<div class="t" style="left:283.20px;top:77.79px;font-size:13.6px;line-height:13.6px;letter-spacing:-0.060px;color:#000;">Load</div>
<div class="t" style="left:15.10px;top:109.89px;font-size:13.6px;line-height:13.6px;letter-spacing:0.057px;color:#000;">Step 1: Image Series Management</div>
<div class="t" style="left:26.20px;top:151.19px;font-size:13.6px;line-height:13.6px;letter-spacing:-0.033px;color:#000;">Step 1a: Load Image Series</div>
<div class="t" style="left:37.80px;top:192.99px;font-size:13.6px;line-height:13.6px;letter-spacing:0.302px;color:#000;">Mark Mustermann</div>
<div class="t" style="left:108.90px;top:225.99px;font-size:11px;line-height:11px;letter-spacing:0.161px;color:#000;">Date</div>
<div class="t" style="left:208.30px;top:225.99px;font-size:11px;line-height:11px;letter-spacing:0.461px;color:#000;">Time</div>
<div class="t" style="left:298.80px;top:225.99px;font-size:11px;line-height:11px;letter-spacing:0.463px;color:#000;">Modality</div>
<div class="t" style="left:40.60px;top:251.49px;font-size:11px;line-height:11px;letter-spacing:0.000px;color:#000;">1</div>
<div class="t" style="left:39.30px;top:281.29px;font-size:11px;line-height:11px;letter-spacing:0.000px;color:#000;">2</div>
<div class="t" style="left:39.30px;top:311.29px;font-size:11px;line-height:11px;letter-spacing:0.000px;color:#000;">3</div>
<div class="t" style="left:74.80px;top:249.29px;font-size:13.6px;line-height:13.6px;letter-spacing:1.327px;color:#000;">2011/11/01</div>
<div class="t" style="left:74.50px;top:279.09px;font-size:13.6px;line-height:13.6px;letter-spacing:1.136px;color:#000;">2012/02/15</div>
<div class="t" style="left:74.50px;top:309.09px;font-size:13.6px;line-height:13.6px;letter-spacing:1.136px;color:#000;">2012/05/16</div>
<div class="t" style="left:174.40px;top:249.29px;font-size:13.6px;line-height:13.6px;letter-spacing:0.535px;color:#000;">01:02:03 pm</div>
<div class="t" style="left:174.40px;top:279.09px;font-size:13.6px;line-height:13.6px;letter-spacing:0.535px;color:#000;">02:03:04 pm</div>
<div class="t" style="left:174.40px;top:309.09px;font-size:13.6px;line-height:13.6px;letter-spacing:0.535px;color:#000;">03:04:05 pm</div>
<div class="t" style="left:273.70px;top:248.79px;font-size:13.6px;line-height:13.6px;letter-spacing:-0.366px;color:#000;">PET/CT</div>
<div class="t" style="left:273.70px;top:278.79px;font-size:13.6px;line-height:13.6px;letter-spacing:-0.366px;color:#000;">PET/CT</div>
<div class="t" style="left:273.70px;top:308.79px;font-size:13.6px;line-height:13.6px;letter-spacing:-0.366px;color:#000;">PET/CT</div>
<div class="t" style="left:26.30px;top:472.99px;font-size:13.6px;line-height:13.6px;letter-spacing:0.031px;color:#000;">Step 1b: Register Image Series</div>
<div class="t" style="left:15.00px;top:614.59px;font-size:13.6px;line-height:13.6px;letter-spacing:0.035px;color:#000;">Step 2: Lesions</div>
<div class="t" style="left:15.00px;top:644.59px;font-size:13.6px;line-height:13.6px;letter-spacing:0.068px;color:#000;">Step 3: Analysis</div>
<div class="t" style="left:11.10px;top:680.09px;font-size:13.6px;line-height:13.6px;letter-spacing:0.362px;color:#000;">Timepoint Slider:</div>
<div class="t" style="left:11.50px;top:727.59px;font-size:13.6px;line-height:13.6px;letter-spacing:0.545px;color:#000;">Currently selected: 2012/05/16</div>
<div class="t" style="left:442.00px;top:46.24px;font-size:12px;line-height:12px;letter-spacing:0.000px;color:#000;">1</div>
<div class="t" style="left:440.40px;top:449.22px;font-size:12.5px;line-height:12.5px;letter-spacing:0.000px;color:#000;">R</div>
<div class="t" style="left:725.00px;top:449.22px;font-size:12.5px;line-height:12.5px;letter-spacing:0.000px;color:#000;">Y</div>
<div class="t" style="left:1008.50px;top:449.22px;font-size:12.5px;line-height:12.5px;letter-spacing:0.000px;color:#000;">G</div>
<div class="t" style="left:658.50px;top:450.02px;font-size:12.5px;line-height:12.5px;letter-spacing:-0.460px;color:#000;">S: 0,00</div>
<div class="t" style="left:942.40px;top:450.02px;font-size:12.5px;line-height:12.5px;letter-spacing:-0.392px;color:#000;">R: 0,00</div>
<div class="t" style="left:1229.30px;top:450.02px;font-size:12.5px;line-height:12.5px;letter-spacing:-0.460px;color:#000;">A: 0,00</div>
</body></html>
